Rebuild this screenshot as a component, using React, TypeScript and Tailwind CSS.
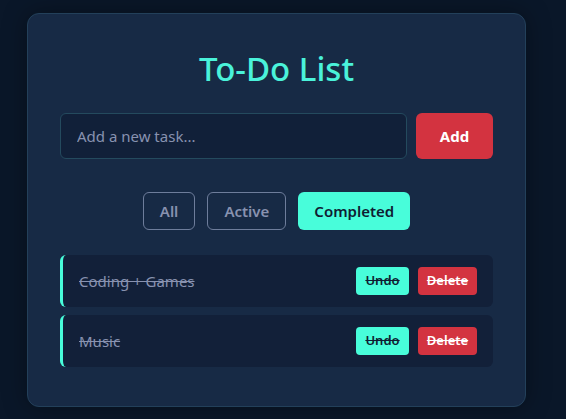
import { useState } from "react";

type Task = { id: number; text: string; done: boolean };

const tasks: Task[] = [
  { id: 1, text: "Coding + Games", done: true },
  { id: 2, text: "Music", done: true },
];

const filters = ["All", "Active", "Completed"];

const App = () => {
  const [filter, setFilter] = useState("Completed");

  return (
    <div className="min-h-screen bg-[#0a1729] pt-[13px] pl-[27px] font-['Noto_Sans',sans-serif]">
      <div className="w-[499px] rounded-xl border border-[#23405a] bg-[#172a45] px-8 pt-[33px] pb-[39px] shadow-[0_0_24px_rgba(0,0,0,0.35)]">
        <h1 className="text-center text-[33px] leading-[44px] font-medium text-[#4af2da]">To-Do List</h1>

        <div className="mt-[22px] flex gap-[9px]">
          <input
            className="h-[46px] flex-1 rounded-md border border-[#244a5e] bg-[#112039] px-4 text-[15px] text-[#ccd6f6] placeholder-[#8892b0] outline-none"
            placeholder="Add a new task..."
          />
          <button className="h-[46px] w-[77px] rounded-md bg-[#d33340] text-[15px] font-bold text-white">Add</button>
        </div>

        <div className="mt-[33px] flex justify-center gap-3">
          {filters.map((f) => (
            <button
              key={f}
              onClick={() => setFilter(f)}
              className={`h-[38px] rounded-md px-4 text-[15px] font-semibold ${
                filter === f
                  ? "bg-[#48fdda] text-[#0f1d33]"
                  : "border border-[#6e7d9b] text-[#8892b0]"
              }`}
            >
              {f}
            </button>
          ))}
        </div>

        <ul className="mt-[25px] flex flex-col gap-2">
          {tasks.map((t) => (
            <li
              key={t.id}
              className="flex h-[52px] items-center justify-between rounded-md border-l-[3px] border-[#48fdda] bg-[#122039] pl-4 pr-4 line-through decoration-[#8892b0]"
            >
              <span className="text-[15px] text-[#8892b0]">{t.text}</span>
              <div className="flex gap-[9px]">
                <button className="h-7 w-[53px] rounded-sm bg-[#48fdda] text-[13px] font-semibold text-[#0f1d33] line-through">Undo</button>
                <button className="h-7 w-[59px] rounded-sm bg-[#d33340] text-[13px] font-semibold text-white line-through">Delete</button>
              </div>
            </li>
          ))}
        </ul>
      </div>
    </div>
  );
};

export default App;
